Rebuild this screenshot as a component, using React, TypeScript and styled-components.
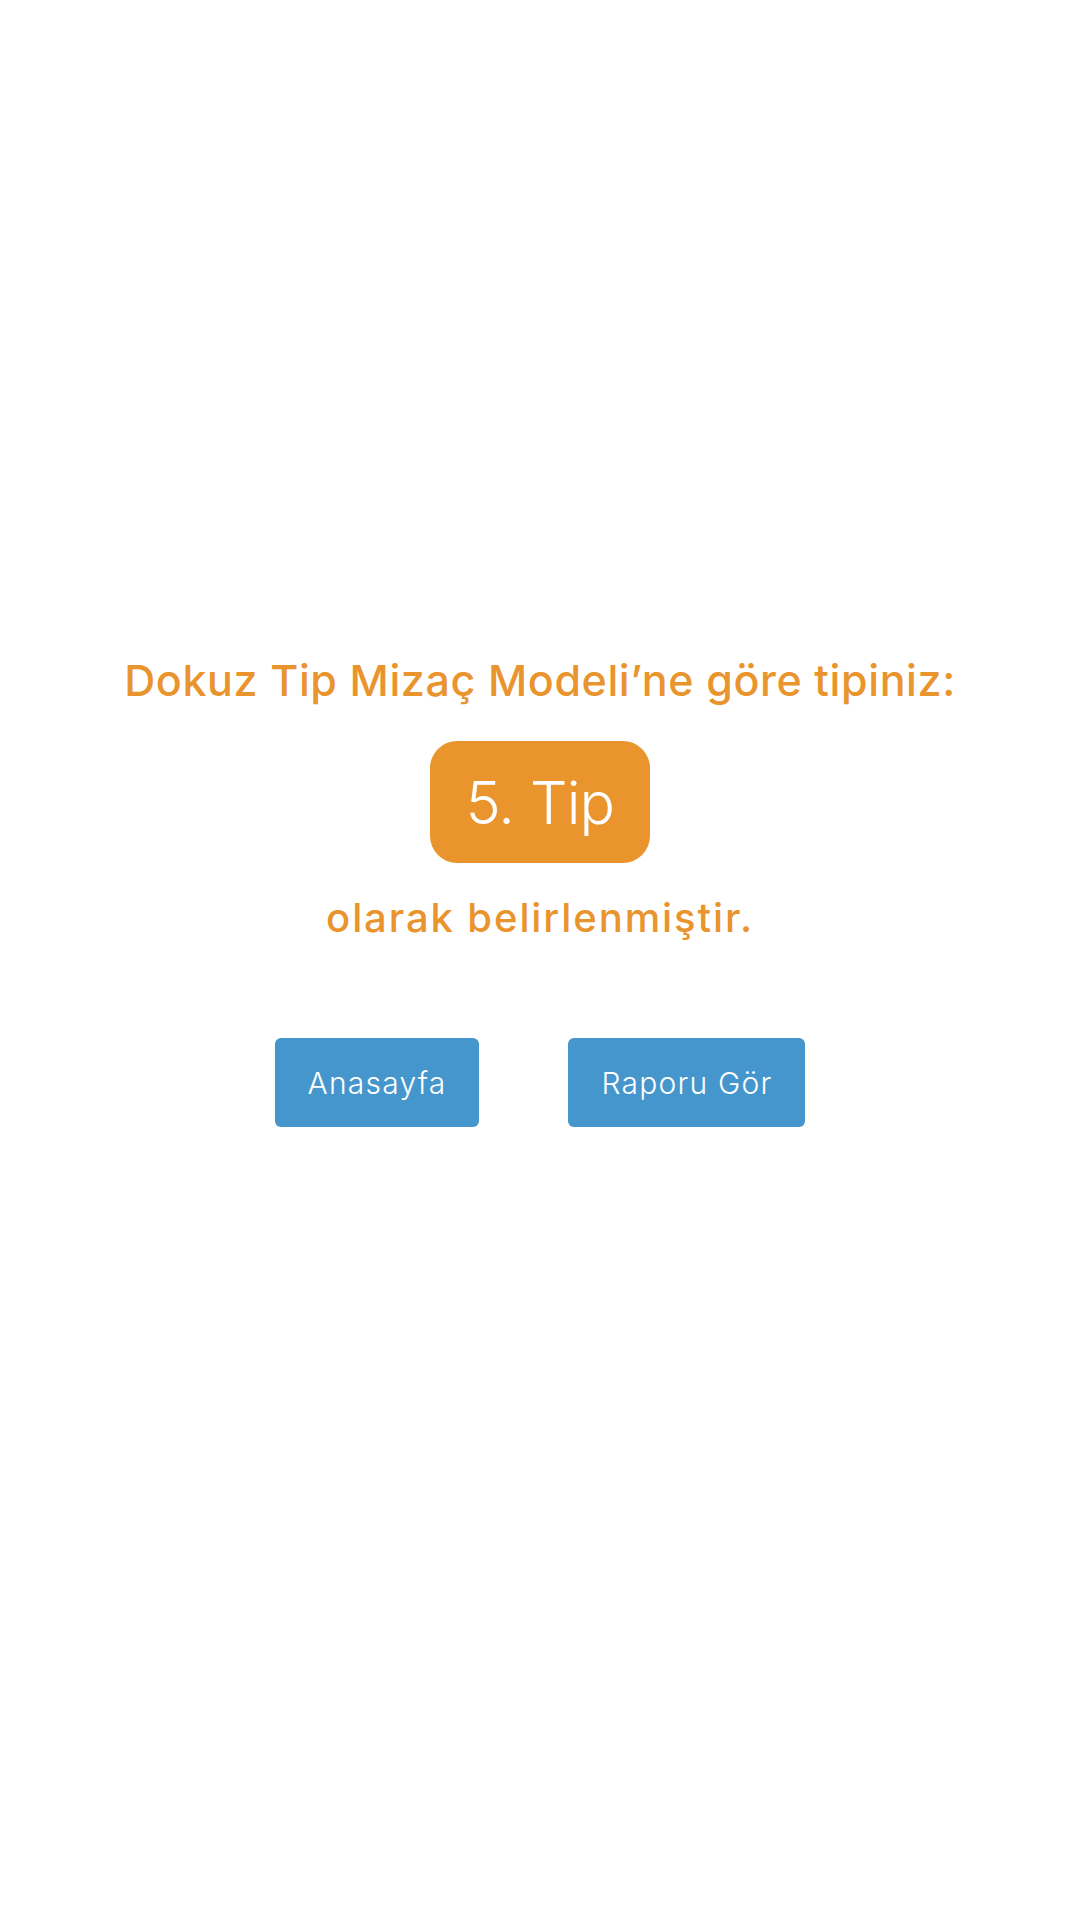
import styled, { createGlobalStyle } from "styled-components";

const GlobalStyle = createGlobalStyle`
  html, body {
    margin: 0;
    padding: 0;
    background: #ffffff;
  }
  body {
    font-family: Inter, Lato, "Noto Sans", sans-serif;
  }
`;

const ORANGE = "#E9942D";
const BLUE = "#4596CD";

const Page = styled.main`
  min-height: 1920px;
  display: flex;
  flex-direction: column;
  align-items: center;
  padding-top: 659px;
  box-sizing: border-box;
`;

const Title = styled.h1`
  margin: 0;
  font-size: 43px;
  line-height: 1;
  font-weight: 500;
  letter-spacing: 0.6px;
  color: ${ORANGE};
  text-align: center;
`;

const Badge = styled.div`
  margin-top: 39px;
  height: 122px;
  padding: 0 36px;
  display: flex;
  align-items: center;
  justify-content: center;
  background: ${ORANGE};
  border-radius: 27px;
  color: #ffffff;
  font-size: 59px;
  font-weight: 300;
  letter-spacing: -0.8px;
  line-height: 1;
`;

const Subtitle = styled.p`
  margin: 35px 0 0;
  font-size: 40px;
  line-height: 1;
  font-weight: 500;
  letter-spacing: 1.9px;
  color: ${ORANGE};
  text-align: center;
`;

const Actions = styled.div`
  margin-top: 100px;
  display: flex;
  gap: 89px;
`;

const ActionButton = styled.button`
  height: 89px;
  padding: 0 33px;
  border: none;
  border-radius: 6px;
  background: ${BLUE};
  color: #ffffff;
  font-family: inherit;
  font-size: 30px;
  font-weight: 300;
  letter-spacing: 1.2px;
  line-height: 1;
  cursor: pointer;
`;

export default function App() {
  return (
    <>
      <GlobalStyle />
      <Page>
        <Title>Dokuz Tip Mizaç Modeli’ne göre tipiniz:</Title>
        <Badge>5. Tip</Badge>
        <Subtitle>olarak belirlenmiştir.</Subtitle>
        <Actions>
          <ActionButton>Anasayfa</ActionButton>
          <ActionButton>Raporu Gör</ActionButton>
        </Actions>
      </Page>
    </>
  );
}
